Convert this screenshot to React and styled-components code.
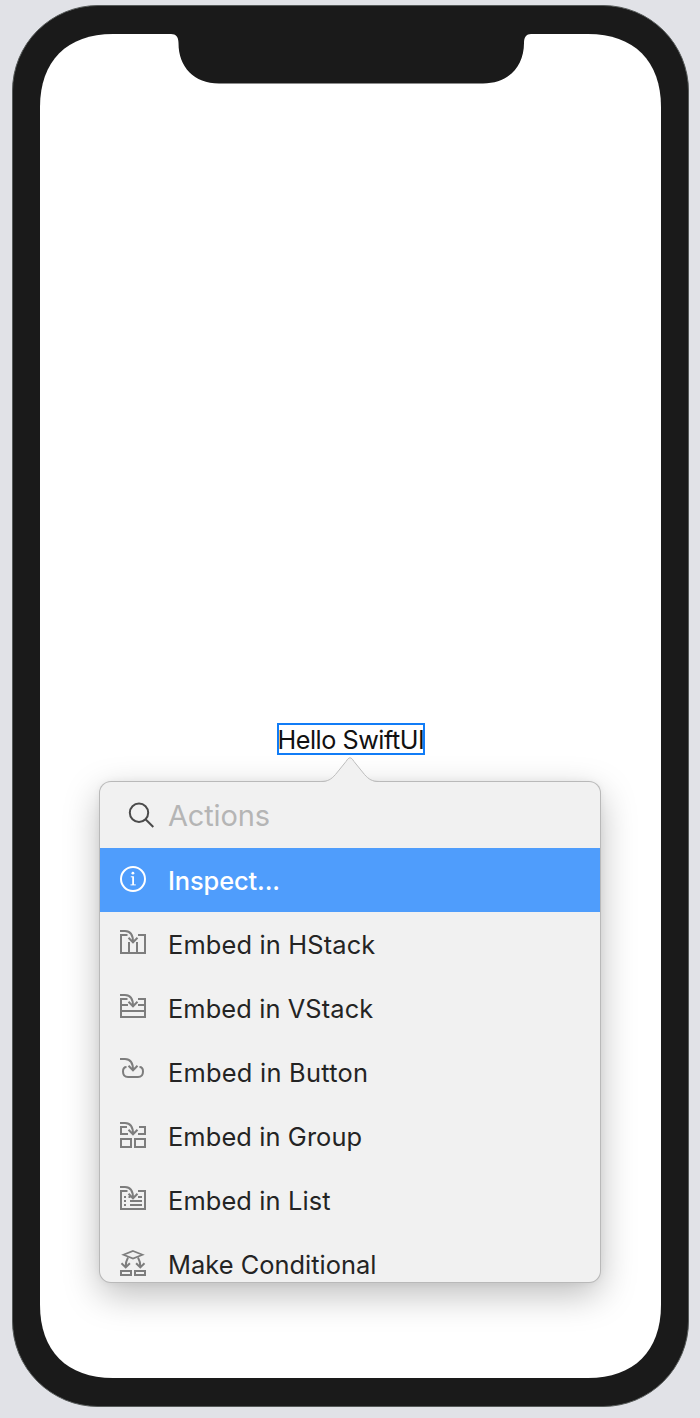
import React from 'react';
import styled, { createGlobalStyle } from 'styled-components';

const GlobalStyle = createGlobalStyle`
  body {
    margin: 0;
    background: #e1e2e7;
    font-family: Inter, 'Liberation Sans', sans-serif;
  }
`;

const Canvas = styled.main`
  box-sizing: border-box;
  height: 1418px;
  padding: 5px 11px 11px 12px;
  overflow: hidden;
`;

const Phone = styled.div`
  box-sizing: border-box;
  height: 1402px;
  padding: 28px 27px 28px 27px;
  border: 1px solid #565a59;
  border-radius: 86px;
  background: #1a1a1a;
`;

const Screen = styled.div`
  position: relative;
  display: flex;
  flex-direction: column;
  align-items: center;
  height: 1344px;
  background: #fff;
  clip-path: path('M0 73C0 27 27 0 73 0H548C594 0 621 27 621 73V1271C621 1317 594 1344 548 1344H73C27 1344 0 1317 0 1271Z');
`;

const Notch = styled.svg`
  display: block;
  width: 360px;
  height: 50px;
  margin: 0 0 639px 0;
`;

const Selection = styled.div`
  position: relative;
  box-sizing: border-box;
  width: 148px;
  height: 32px;
  margin-left: 1px;
  border: 2px solid #117cf6;
`;

const Label = styled.span`
  display: block;
  margin-left: -1.5px;
  color: #111;
  font-size: 25.2px;
  line-height: 30px;
  letter-spacing: -0.47px;
  white-space: nowrap;
`;

const Popover = styled.section`
  position: absolute;
  top: 57px;
  left: -179px;
  width: 500px;
  height: 500px;
  border-radius: 11px;
  background: #f1f1f1;
  box-shadow: 0 0 0 1px #b9b9b9, 0 12px 36px rgba(0, 0, 0, 0.27), 0 0 8px rgba(0, 0, 0, 0.06);
`;

const Arrow = styled.svg`
  position: absolute;
  top: -25px;
  left: 220px;
  width: 60px;
  height: 27px;
`;

const List = styled.div`
  height: 500px;
  overflow: hidden;
  border-radius: 11px;
`;

const SearchRow = styled.div`
  display: flex;
  align-items: center;
  height: 66px;
  padding-left: 28px;
  gap: 12px;
`;

const Placeholder = styled.span`
  margin-top: 1px;
  color: #b5b5b5;
  font-size: 29px;
  letter-spacing: -0.15px;
  line-height: 36px;
`;

const Row = styled.div`
  display: flex;
  align-items: center;
  gap: 22px;
  height: 64px;
  padding-left: 20px;
  background: ${(p) => (p.$active ? '#4f9dfc' : 'transparent')};
  color: ${(p) => (p.$active ? '#fff' : '#242424')};
`;

const RowText = styled.span`
  margin-top: 2px;
  font-size: 25.4px;
  font-weight: ${(p) => (p.$active ? 500 : 400)};
  letter-spacing: ${(p) => p.$spacing ?? -0.1}px;
  line-height: 32px;
  white-space: nowrap;
`;

const Icon = styled.svg`
  flex: none;
  width: 26px;
  height: 28px;
  fill: none;
  stroke: ${(p) => (p.$active ? '#fff' : '#7d7d7d')};
  stroke-width: 2;
`;

const SearchIcon = styled.svg`
  width: 28px;
  height: 28px;
  fill: none;
  stroke: #4b4b4b;
  stroke-width: 2;
`;

const inArrow = (
  <>
    <path d="M0 1H5C11 1 13 5 13 12" />
    <path d="M8.5 7.8L13 12.3L17.5 7.8" />
  </>
);

const frame = <path d="M7.5 5H1V23H25V5H18" />;

const icons = {
  info: (
    <>
      <circle cx="13" cy="13" r="12" />
      <path d="M13.1 10.5V19" strokeWidth="1.8" />
      <path d="M10.8 10.8H13.5M10.5 18.9H15.8" strokeWidth="1" />
      <circle cx="12.9" cy="7.2" r="1.4" fill="#fff" stroke="none" />
    </>
  ),
  hstack: <>{inArrow}{frame}<path d="M9 12V23M17 12V23" /></>,
  vstack: <>{inArrow}{frame}<path d="M1 11H8M18 11H25M1 17H25" /></>,
  button: <>{inArrow}<path d="M6.5 9C4 9 3 10.5 3 13.5C3 17.5 4.5 19 8 19H18C21.5 19 23 17.5 23 13.5C23 10.5 22 9 19.5 9" /></>,
  group: <>{inArrow}<path d="M7 5H1V12H8M19 5H25V12H18M1 17H11V25H1ZM15 17H25V25H15Z" /></>,
  list: <>{inArrow}{frame}<path d="M4 11H6M4 15H6M4 19H6M8.5 11H10.5M18 11H22M10 15H22M10 19H22" /></>,
  conditional: (
    <>
      <path d="M13 1L22.500 4.800L13 8.600L3.500 4.800Z" strokeWidth="1.7" />
      <path d="M8 7.5C6.500 10 5.700 13 5.700 17M1.500 13.200L5.700 17.400L9.900 13.200M18 7.500C19.500 10 20.300 13 20.300 17M16.100 13.200L20.300 17.400L24.500 13.200" />
      <path d="M1 21H11V25H1ZM15 21H25V25H15Z" />
    </>
  ),
};

const actions = [
  { icon: 'info', label: 'Inspect...', active: true },
  { icon: 'hstack', label: 'Embed in HStack', spacing: 0.15 },
  { icon: 'vstack', label: 'Embed in VStack', spacing: 0.1 },
  { icon: 'button', label: 'Embed in Button', spacing: 0.25 },
  { icon: 'group', label: 'Embed in Group', spacing: 0.11 },
  { icon: 'list', label: 'Embed in List', spacing: 0.13 },
  { icon: 'conditional', label: 'Make Conditional', spacing: 0.03 },
];

export default function App() {
  return (
    <>
      <GlobalStyle />
      <Canvas>
        <Phone>
          <Screen>
            <Notch viewBox="0 0 360 50">
              <path d="M0 -1V0C5 0 7.500 3 7.500 9C7.500 33 23 49.500 48 49.500H312C337 49.500 353 33 353 9C353 3 355.500 0 360 0V-1Z" fill="#1a1a1a" />
            </Notch>
            <Selection>
              <Label>Hello SwiftUI</Label>
              <Popover>
                <Arrow viewBox="0 0 60 27">
                  <path d="M0 27V25C8 25 11 23 15.500 18L26 5C29 0 31 0 34 5L44.500 18C49 23 52 25 60 25V27Z" fill="#f1f1f1" />
                  <path d="M0 24.500C8 24.500 11 22.500 15.500 17.500L26 4.500C29 -.4 31 -.4 34 4.500L44.500 17.500C49 22.500 52 24.500 60 24.500" fill="none" stroke="#bdbdbd" />
                </Arrow>
                <List>
                  <SearchRow>
                    <SearchIcon viewBox="0 0 28 28">
                      <circle cx="11" cy="11.7" r="9.2" />
                      <path d="M17.5 18.200L25.300 26" />
                    </SearchIcon>
                    <Placeholder>Actions</Placeholder>
                  </SearchRow>
                  {actions.map(({ icon, label, active, spacing }) => (
                    <Row key={label} $active={active}>
                      <Icon viewBox="0 0 26 28" $active={active}>{icons[icon]}</Icon>
                      <RowText $active={active} $spacing={spacing}>{label}</RowText>
                    </Row>
                  ))}
                </List>
              </Popover>
            </Selection>
          </Screen>
        </Phone>
      </Canvas>
    </>
  );
}
